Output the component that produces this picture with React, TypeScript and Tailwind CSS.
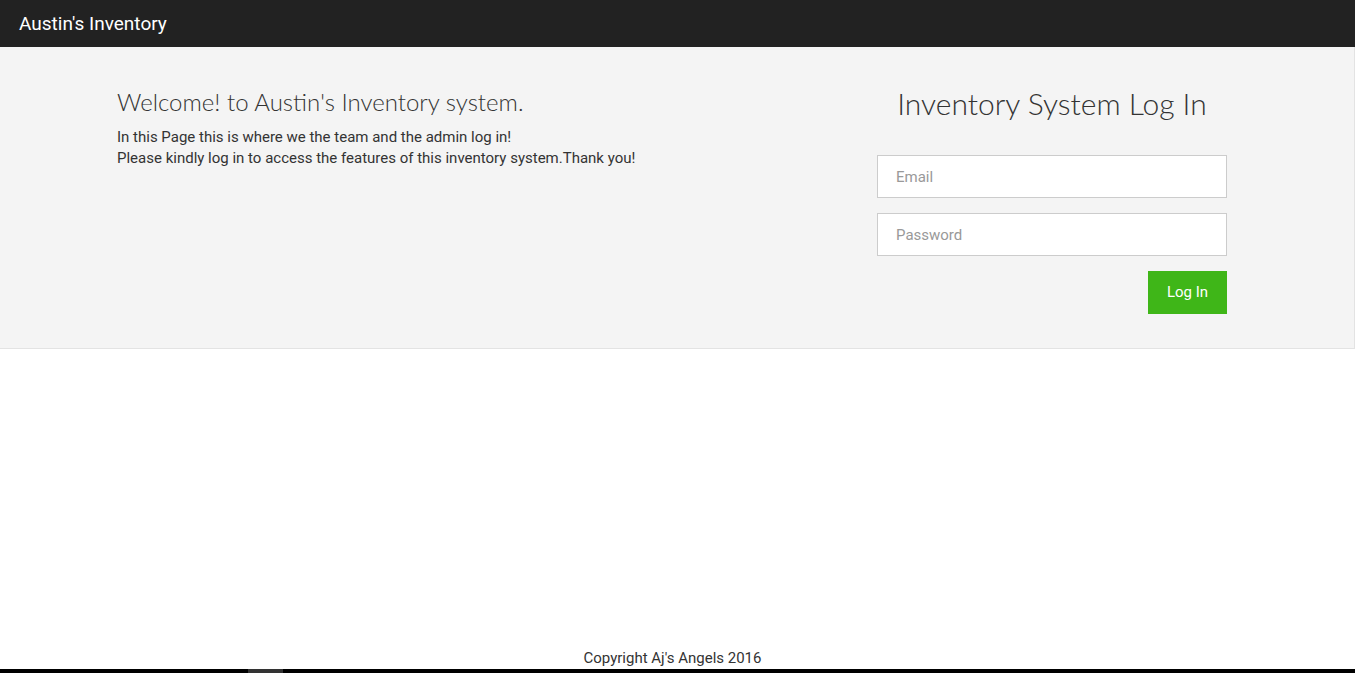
import React from 'react';

export default function App() {
  return (
    <div className="min-h-[673px] flex flex-col bg-white text-[#333] font-['Roboto',sans-serif]">
      {/* Navbar */}
      <header className="h-[47px] bg-[#222222] flex items-center px-[19px]">
        <span className="text-white text-[19px] leading-none">Austin's Inventory</span>
      </header>

      {/* Jumbotron */}
      <section className="h-[302px] bg-[#f4f4f4] border-b border-r border-[#e3e3e3] flex pl-[117px] pr-[127px]">
        <div className="flex-1 pt-[39px]">
          <h2 className="font-['Lato',sans-serif] font-light text-[24px] leading-[32px] text-[#333]">
            Welcome! to Austin's Inventory system.
          </h2>
          <p className="mt-[9px] text-[15px] leading-[21px]">
            In this Page this is where we the team and the admin log in!
            <br />
            Please kindly log in to access the features of this inventory system.Thank you!
          </p>
        </div>

        <div className="w-[350px] pt-[37px] flex flex-col">
          <h1 className="font-['Lato',sans-serif] font-light text-[30px] leading-[38px] text-center text-[#333]">
            Inventory System Log In
          </h1>
          <input
            placeholder="Email"
            className="mt-[33px] h-[43px] w-full bg-white border border-[#cccccc] px-[18px] text-[15px] placeholder:text-[#999] outline-none"
          />
          <input
            type="password"
            placeholder="Password"
            className="mt-[15px] h-[43px] w-full bg-white border border-[#cccccc] px-[18px] text-[15px] placeholder:text-[#999] outline-none"
          />
          <div className="mt-[15px] flex justify-end">
            <button className="h-[43px] w-[79px] bg-[#3fb618] text-white text-[15px] font-normal">Log In</button>
          </div>
        </div>
      </section>

      <div className="flex-1" />

      {/* Footer */}
      <footer className="text-center text-[15px] leading-[20px] pb-[1px] pr-[10px]">Copyright Aj's Angels 2016</footer>
      <div className="h-[4px] bg-black flex">
        <div className="ml-[248px] w-[35px] bg-[#333]" />
      </div>
    </div>
  );
}
